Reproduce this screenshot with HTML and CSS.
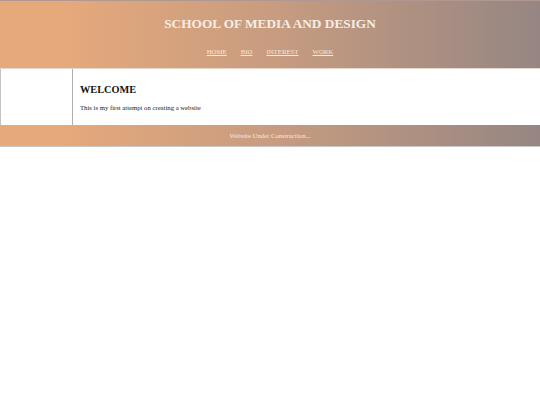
FILE: index.html
```html
<!DOCTYPE html>
<html>
<head>
<meta charset="utf-8">
<link rel="stylesheet" href="styles.css">
</head>
<body>
<div class="page">
  <header class="header">
    <h1 class="title">SCHOOL OF MEDIA AND DESIGN</h1>
    <nav class="nav">
      <a href="#">HOME</a>
      <a href="#">BIO</a>
      <a href="#">INTEREST</a>
      <a href="#">WORK</a>
    </nav>
  </header>
  <div class="main">
    <aside class="side"></aside>
    <section class="content">
      <h2 class="welcome">WELCOME</h2>
      <p class="text">This is my first attempt on creating a website</p>
    </section>
  </div>
  <footer class="footer">Website Under Construction...</footer>
</div>
</body>
</html>
```
FILE: styles.css
```css
html, body {
  margin: 0;
  padding: 0;
  background: #ffffff;
}
body {
  font-family: "Liberation Serif", "Times New Roman", serif;
}
.page {
  width: 540px;
}
.header {
  height: 67px;
  border-top: 1px solid #b09890;
  border-bottom: 1px solid #e8d8cc;
  background: linear-gradient(to right, #e5a97b 12%, #c89c80 50%, #968683 100%);
  display: flex;
  flex-direction: column;
  align-items: center;
}
.title {
  margin: 15px 0 0 0;
  font-size: 13.3px;
  line-height: 16px;
  font-weight: bold;
  color: #f7ede5;
}
.nav {
  margin-top: 16px;
  display: flex;
  gap: 14px;
  font-size: 6.8px;
  line-height: 8px;
}
.nav a {
  color: #f5e7dc;
  text-decoration: underline;
}
.main {
  display: flex;
  height: 56px;
  border-left: 1px solid #c4c4c4;
}
.side {
  width: 71px;
  border-right: 1px solid #b0b0b0;
}
.content {
  padding: 15px 0 0 7px;
}
.welcome {
  margin: 0;
  font-size: 10.3px;
  line-height: 12px;
  font-weight: bold;
  color: #111;
}
.text {
  margin: 8px 0 0 0;
  font-size: 6.7px;
  line-height: 8px;
  color: #222;
}
.footer {
  height: 21px;
  border-bottom: 1px solid #c8c8c8;
  background: linear-gradient(to right, #e5a97b 12%, #c89c80 50%, #968683 100%);
  color: #f5e9df;
  font-size: 6.7px;
  line-height: 21px;
  text-align: center;
}
```
